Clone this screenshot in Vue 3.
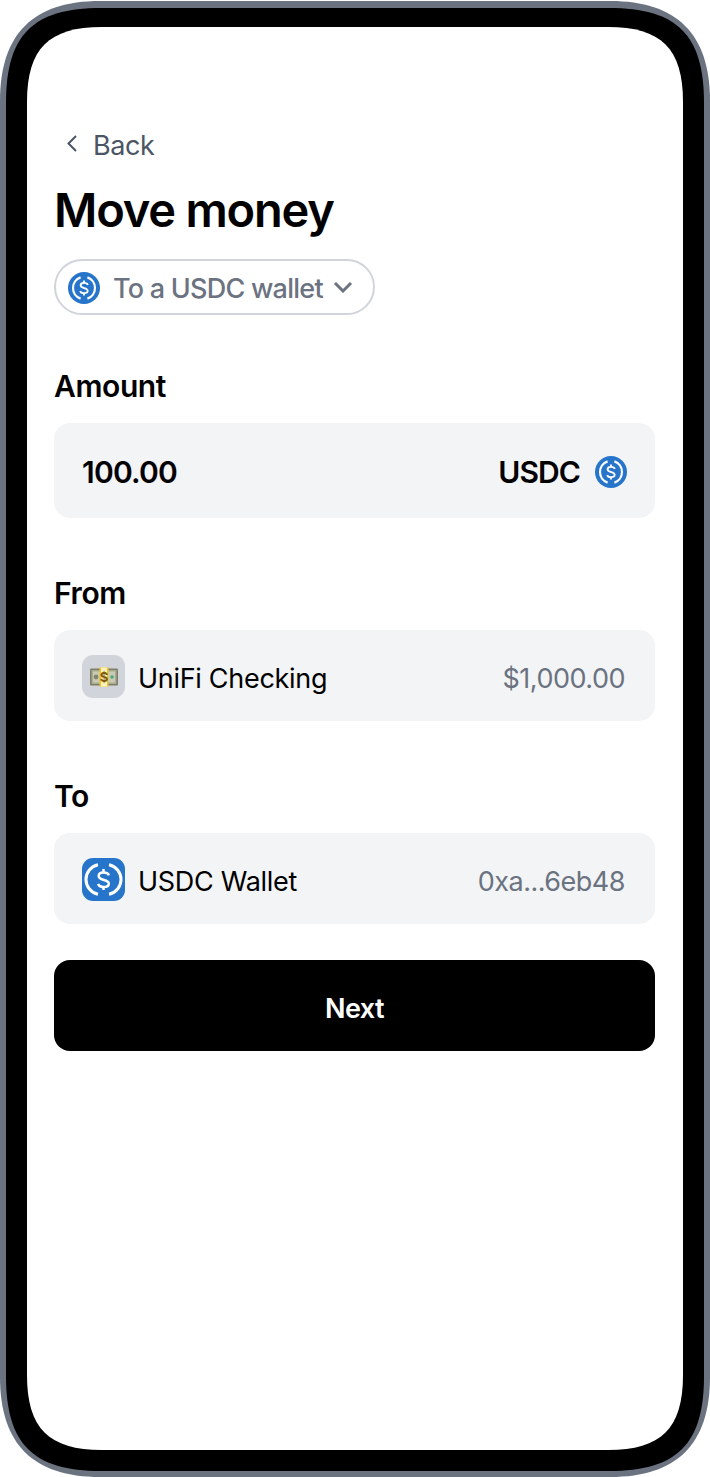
<template>
  <div class="phone">
    <div class="frame" :style="{ clipPath: corners(710, 1476, 100, 0.33) }">
      <div class="bezel" :style="{ clipPath: corners(698, 1463, 95, 0.283) }">
        <div class="screen" :style="{ clipPath: corners(656, 1423, 75, 0.289) }">
          <a class="back" href="#" @click.prevent>
            <svg class="back-icon" width="14" height="20" viewBox="0 0 14 20" fill="none">
              <path d="M11 2 L3.5 9.5 L11 17" stroke="#4b5563" stroke-width="2" />
            </svg>
            <span>Back</span>
          </a>
          <h1>Move money</h1>
          <button class="picker">
            <svg class="coin" width="32" height="32" viewBox="0 0 32 32">
              <use href="#usdc-round" />
            </svg>
            <span>To a USDC wallet</span>
            <svg class="chevron" width="20" height="12" viewBox="0 0 20 12" fill="none">
              <path d="M2 2 L10 10 L18 2" stroke="#6b7280" stroke-width="3" />
            </svg>
          </button>

          <svg class="defs" width="0" height="0">
            <defs>
              <g id="usdc-round">
                <circle cx="16" cy="16" r="16" fill="#2775ca" />
                <path d="M12.6 5.4 A11.2 11.2 0 0 0 12.6 26.6" fill="none" stroke="#fff" stroke-width="2.2" />
                <path d="M19.4 5.4 A11.2 11.2 0 0 1 19.4 26.6" fill="none" stroke="#fff" stroke-width="2.2" />
                <path d="M19.8 12.9 C19.4 11.4 18 10.8 16 10.8 C13.9 10.8 12.6 11.8 12.6 13.3 C12.6 17 19.7 15 19.7 18.8 C19.7 20.3 18.2 21.2 16 21.2 C14 21.2 12.6 20.5 12.2 19" fill="none" stroke="#fff" stroke-width="1.8" />
                <path d="M16 8.6 V11 M16 21 V23.4" stroke="#fff" stroke-width="1.8" />
              </g>
            </defs>
          </svg>

          <h2 class="label amount-label">Amount</h2>
          <div class="amount">
            <span class="amount-value">100.00</span>
            <span class="amount-unit">USDC</span>
            <svg class="coin" width="32" height="32" viewBox="0 0 32 32">
              <use href="#usdc-round" />
            </svg>
          </div>

          <div v-for="row in rows" :key="row.label" class="block">
            <h2 class="label">{{ row.label }}</h2>
            <div class="row">
              <span v-if="row.icon === 'cash'" class="tile tile-gray">
                <svg width="28" height="20" viewBox="0 0 28 20">
                  <rect x="0" y="1.5" width="28" height="17" rx="1" fill="#7f7f68" />
                  <rect x="1.5" y="3" width="25" height="14" fill="#a9ab92" />
                  <rect x="3" y="4.5" width="22" height="11" fill="#c9cbb4" />
                  <circle cx="6" cy="10" r="2.4" fill="#85866e" />
                  <circle cx="22" cy="10" r="1.8" fill="#4fa583" />
                  <rect x="9.5" y="0.5" width="9" height="19" fill="#f5c518" />
                  <rect x="11" y="0.5" width="6" height="19" fill="#fff3c4" />
                  <text x="14" y="14.8" text-anchor="middle" font-size="13" font-weight="700" font-family="Inter, sans-serif" fill="#7d5c12">$</text>
                </svg>
              </span>
              <span v-else class="tile tile-blue">
                <svg width="43" height="43" viewBox="0 0 43 43">
                  <path d="M16 6.8 A15 15 0 0 0 16 36.2" fill="none" stroke="#fff" stroke-width="3" />
                  <path d="M27 6.8 A15 15 0 0 1 27 36.2" fill="none" stroke="#fff" stroke-width="3" />
                  <path d="M26.8 17.4 C26.3 15.5 24.3 14.6 21.5 14.6 C18.6 14.6 16.7 16 16.7 18.1 C16.7 23.3 26.8 20.6 26.8 25.7 C26.8 27.8 24.6 29 21.5 29 C18.7 29 16.7 28 16.2 25.9" fill="none" stroke="#fff" stroke-width="2.5" />
                  <path d="M21.5 11 V15 M21.5 28 V32" stroke="#fff" stroke-width="2.5" />
                </svg>
              </span>
              <span class="row-name">{{ row.name }}</span>
              <span class="row-value">{{ row.value }}</span>
            </div>
          </div>

          <button class="next">Next</button>
        </div>
      </div>
    </div>
  </div>
</template>

<script setup>
const rows = [
  { label: 'From', name: 'UniFi Checking', value: '$1,000.00', icon: 'cash' },
  { label: 'To', name: 'USDC Wallet', value: '0xa...6eb48', icon: 'usdc' }
]

// phone corners are not circular, so the rounded box is a path
const corners = (w, h, l, a) => {
  const c = l * a
  return `path("M0 ${l} C0 ${c} ${c} 0 ${l} 0 L${w - l} 0 C${w - c} 0 ${w} ${c} ${w} ${l} L${w} ${h - l} C${w} ${h - c} ${w - c} ${h} ${w - l} ${h} L${l} ${h} C${c} ${h} 0 ${h - c} 0 ${h - l} Z")`
}
</script>

<style>
html, body { margin: 0; background: #fff; }
</style>

<style scoped>
.phone {
  width: 710px;
  height: 1477px;
  box-sizing: border-box;
  padding-top: 1px;
  font-family: Inter, "Liberation Sans", sans-serif;
  color: #000;
}

.frame {
  height: 100%;
  box-sizing: border-box;
  padding: 7px 6px 6px;
  background: #6b7280;
}

.bezel {
  height: 100%;
  box-sizing: border-box;
  padding: 19px 21px 21px;
  background: #000;
}

.screen {
  height: 100%;
  box-sizing: border-box;
  padding: 100px 28px 0 27px;
  background: #fff;
}

.back {
  display: flex;
  align-items: center;
  height: 36px;
  color: #4b5563;
  font-size: 27px;
  text-decoration: none;
  letter-spacing: -0.4px;
}

.back-icon { margin: 0 0 3px 11px; flex: none; }
.back span { margin-left: 14px; }

h1 {
  margin: 19px 0 0;
  font-size: 47px;
  line-height: 56px;
  font-weight: 600;
  letter-spacing: -1.2px;
}

.picker {
  display: flex;
  align-items: center;
  width: 321px;
  height: 56px;
  margin-top: 21px;
  padding: 0 0 0 12px;
  box-sizing: border-box;
  background: #fff;
  border: 2px solid #d1d5db;
  border-radius: 28px;
  font-family: inherit;
  font-size: 27px;
  font-weight: 500;
  letter-spacing: -0.75px;
  color: #6b7280;
  white-space: nowrap;
}

.picker span { margin-left: 13px; padding-top: 2px; }
.chevron { margin-left: 10px; flex: none; }
.defs { position: absolute; }
.coin { flex: none; margin-top: 2px; }

.label {
  margin: 0;
  font-size: 30px;
  line-height: 36px;
  font-weight: 600;
  letter-spacing: -0.4px;
}

.amount-label { padding-top: 53px; }

.amount {
  display: flex;
  align-items: center;
  height: 95px;
  margin-top: 19px;
  padding: 0 28px;
  background: #f3f4f6;
  border-radius: 16px;
  font-size: 30px;
  font-weight: 600;
}

.amount-value { flex: 1; letter-spacing: -0.8px; padding-top: 2px; }
.amount-unit { margin-right: 15px; padding-top: 2px; letter-spacing: -0.9px; }

.block { margin-top: 57px; }
.block .row { margin-top: 19px; }

.row {
  display: flex;
  align-items: center;
  height: 91px;
  padding: 0 30px 0 28px;
  background: #f3f4f6;
  border-radius: 16px;
}

.tile {
  display: flex;
  align-items: center;
  justify-content: center;
  width: 43px;
  height: 43px;
  margin-top: 2px;
  border-radius: 11px;
  flex: none;
}

.tile-gray { background: #d1d5db; }
.tile-blue { background: #2775ca; }

.row-name {
  flex: 1;
  margin-left: 13px;
  padding-top: 6px;
  font-size: 27px;
  letter-spacing: -0.3px;
}

.row-value {
  padding-top: 6px;
  font-size: 27px;
  letter-spacing: -0.5px;
  color: #6b7280;
}

.next {
  display: block;
  width: 100%;
  height: 91px;
  margin-top: 36px;
  padding: 6px 0 0;
  background: #000;
  color: #fff;
  border: 0;
  border-radius: 16px;
  font-family: inherit;
  font-size: 27px;
  font-weight: 600;
  letter-spacing: -0.6px;
}
</style>
